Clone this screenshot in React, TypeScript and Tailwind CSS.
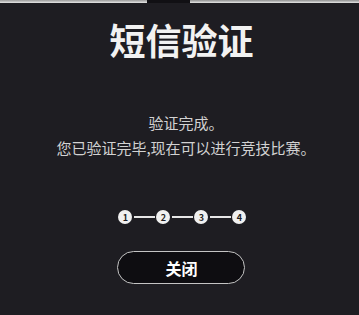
import React from "react";

export default function App() {
  const steps = ["1", "2", "3", "4"];
  return (
    <div
      className="w-[359px] h-[315px] bg-[#1e1d22] flex flex-col items-center overflow-hidden"
      style={{ fontFamily: '"Noto Sans CJK SC", "Noto Sans", sans-serif' }}
    >
      <div className="self-stretch h-[3px] flex">
        <div className="w-[147px] bg-gradient-to-b from-[#9a9a9a] to-[#e8e8e8]" />
        <div className="w-[43px] bg-[#111014]" />
        <div className="flex-1 bg-gradient-to-b from-[#8f8f8f] to-[#e8e8e8]" />
      </div>
      <div className="flex flex-col items-center pl-[4px]">
        <h1 className="mt-[11px] text-[36px] leading-[50px] font-bold text-[#f2f2f2]">
          短信验证
        </h1>
        <div className="mt-[46px] ml-[9px] text-[15px] leading-[25px] text-[#d2d2d2] text-center">
          <p>验证完成。</p>
          <p>您已验证完毕,现在可以进行竞技比赛。</p>
        </div>
        <div className="mt-[50px] ml-[2px] flex items-center h-[14px]">
          {steps.map((s, i) => (
            <React.Fragment key={s}>
              {i > 0 && <div className="w-[21px] h-[2px] bg-[#e6e6e6] mx-[1.5px]" />}
              <div className="w-[14px] h-[14px] rounded-full bg-[#f0f0f0] flex items-center justify-center text-[9px] font-bold text-[#1e1d22] leading-none">
                {s}
              </div>
            </React.Fragment>
          ))}
        </div>
        <button className="mt-[27px] w-[128px] h-[33px] rounded-full border-[1.5px] border-[#c4c4c4] bg-[#0e0d11] text-white text-[16px] font-bold leading-none flex items-center justify-center">
          关闭
        </button>
      </div>
    </div>
  );
}
